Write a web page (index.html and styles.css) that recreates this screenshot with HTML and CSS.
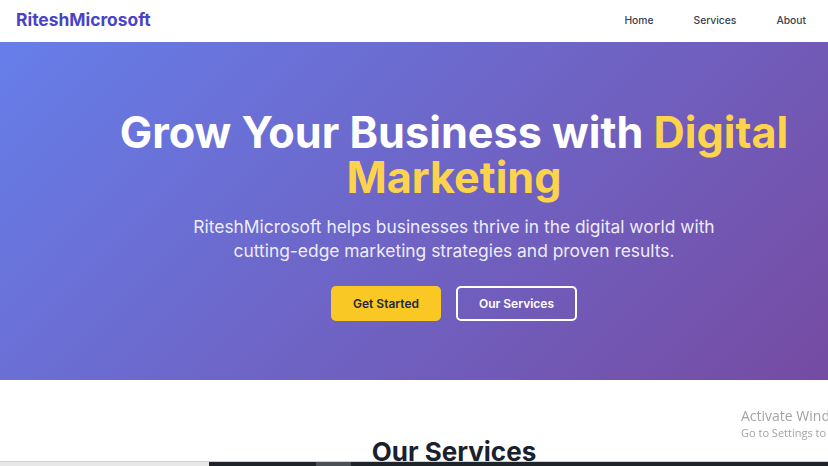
FILE: index.html
```html
<!DOCTYPE html>
<html lang="en">
<head>
<meta charset="utf-8">
<title>RiteshMicrosoft</title>
<link rel="stylesheet" href="styles.css">
</head>
<body>
<header class="header">
  <div class="logo">RiteshMicrosoft</div>
  <nav class="nav">
    <a href="#" class="nav-link">Home</a>
    <a href="#" class="nav-link">Services</a>
    <a href="#" class="nav-link">About</a>
  </nav>
</header>
<section class="hero">
  <div class="hero-inner">
    <h1 class="hero-title">Grow Your Business with <span class="accent">Digital Marketing</span></h1>
    <p class="hero-text">RiteshMicrosoft helps businesses thrive in the digital world with cutting-edge marketing strategies and proven results.</p>
    <div class="hero-actions">
      <a href="#" class="btn btn-primary">Get Started</a>
      <a href="#" class="btn btn-outline">Our Services</a>
    </div>
  </div>
</section>
<section class="services">
  <h2 class="section-title">Our Services</h2>
</section>
<div class="watermark">
  <div class="wm-title">Activate Windows</div>
  <div class="wm-sub">Go to Settings to activate Windows.</div>
</div>
<div class="taskbar">
  <div class="tb-left"></div>
  <div class="tb-dark"></div>
  <div class="tb-light"></div>
  <div class="tb-rest"></div>
</div>
</body>
</html>
```
FILE: styles.css
```css
* { box-sizing: border-box; }
html, body { margin: 0; padding: 0; }
body {
  font-family: Inter, "Noto Sans", sans-serif;
  background: #ffffff;
  overflow: hidden;
}
.header {
  height: 42px;
  display: flex;
  align-items: center;
  justify-content: space-between;
  padding: 0 22px 3px 16px;
  background: #ffffff;
}
.logo {
  font-size: 17.4px;
  font-weight: 700;
  color: #4a43c8;
}
.nav { display: flex; gap: 40px; }
.nav-link {
  font-size: 10.3px;
  color: #374151;
  text-decoration: none;
  font-weight: 500;
}
.hero {
  height: 338px;
  background: linear-gradient(135deg, #667eea 0%, #764ba2 100%);
  display: flex;
  justify-content: center;
  padding-left: 80px;
}
.hero-inner {
  display: flex;
  flex-direction: column;
  align-items: center;
  text-align: center;
  padding-top: 68px;
}
.hero-title {
  margin: 0;
  font-size: 43.2px;
  line-height: 45px;
  font-weight: 700;
  color: #ffffff;
  width: 740px;
}
.accent { color: #fcd34d; }
.hero-text {
  margin: 15px 0 0;
  font-size: 17.4px;
  line-height: 23.5px;
  color: rgba(255,255,255,0.9);
  width: 580px;
}
.hero-actions {
  display: flex;
  gap: 15px;
  margin-top: 24px;
}
.btn {
  display: flex;
  align-items: center;
  justify-content: center;
  height: 35px;
  border-radius: 5px;
  font-size: 12px;
  font-weight: 600;
  text-decoration: none;
}
.btn-primary {
  width: 110px;
  background: #f9c825;
  color: #1f2937;
}
.btn-outline {
  width: 121px;
  border: 2px solid #ffffff;
  color: #ffffff;
}
.services {
  display: flex;
  justify-content: center;
  padding: 56px 0 0 80px;
}
.section-title {
  margin: 0;
  font-size: 26px;
  font-weight: 700;
  color: #1a202c;
}
.watermark {
  position: fixed;
  left: 741px;
  top: 407px;
  white-space: nowrap;
  color: #a3a3a3;
  font-family: "Open Sans", sans-serif;
}
.wm-title { font-size: 14px; line-height: 18px; }
.wm-sub { font-size: 11px; line-height: 16px; }
.taskbar {
  position: fixed;
  left: 0;
  right: 0;
  bottom: 0;
  height: 5px;
  display: flex;
  border-top: 1px solid #cfcfcf;
}
.tb-left { width: 209px; background: #e8e8e8; }
.tb-dark { width: 107px; background: #1f242b; }
.tb-light { width: 35px; background: #4a4f55; }
.tb-rest { flex: 1; background: #1f242b; }
```
